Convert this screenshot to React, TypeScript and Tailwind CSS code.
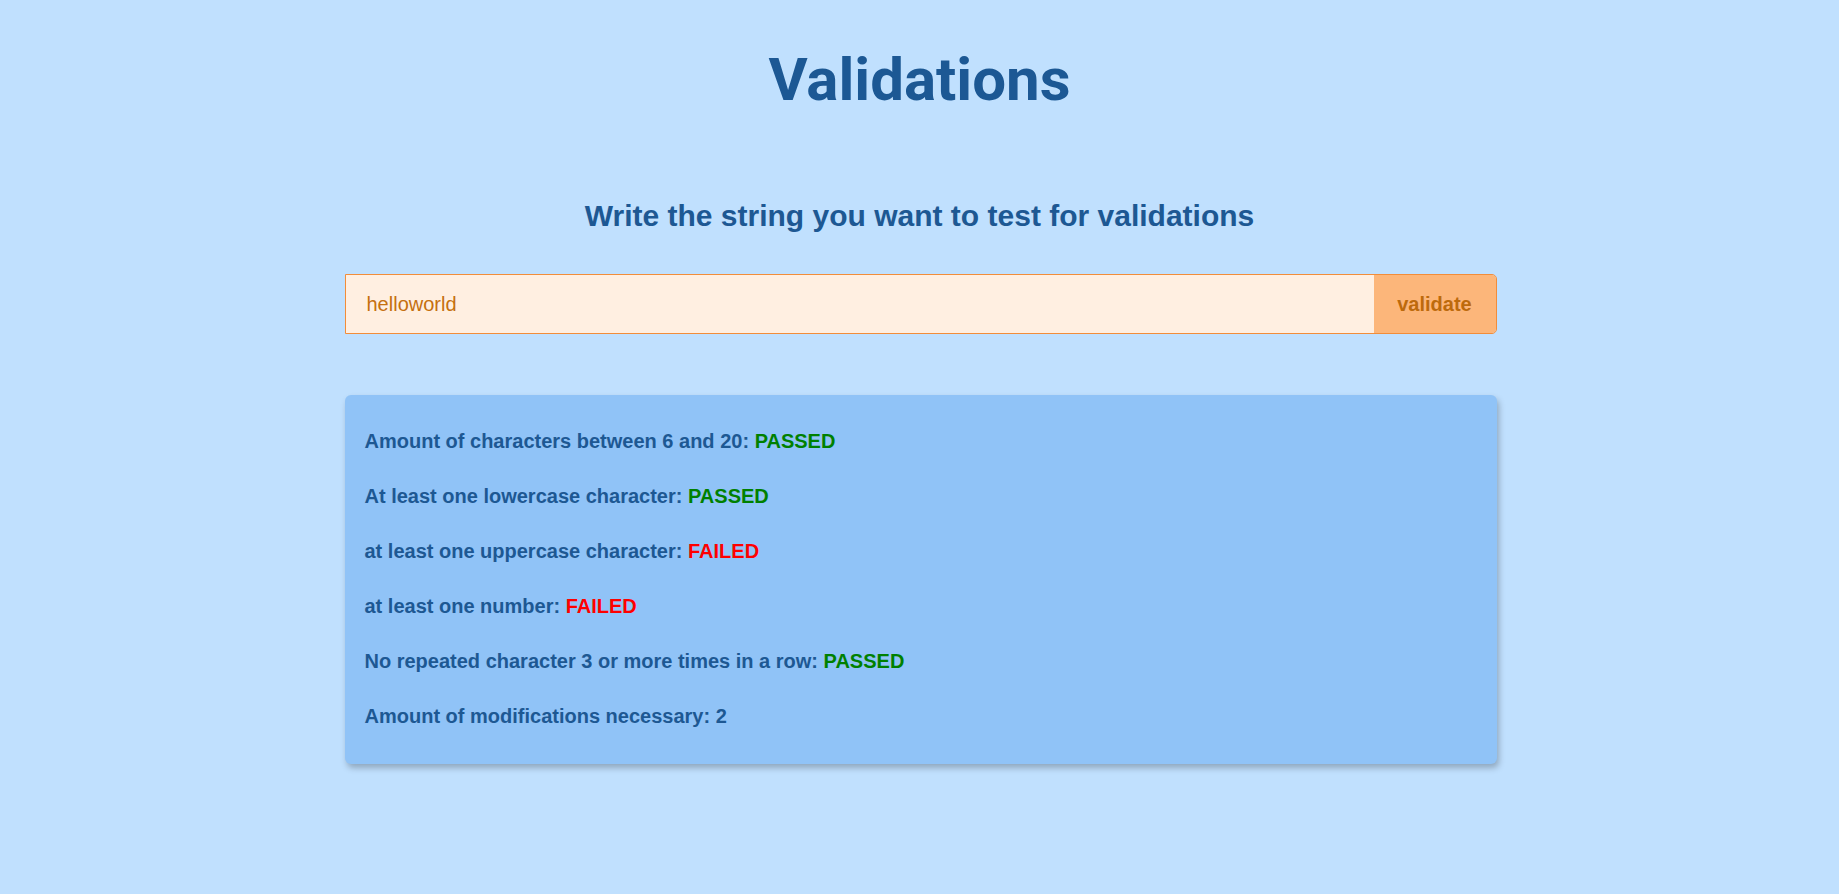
import React, { useState } from 'react';

type Rule = { label: string; passed: boolean };

const getRules = (value: string): Rule[] => [
  { label: 'Amount of characters between 6 and 20', passed: value.length >= 6 && value.length <= 20 },
  { label: 'At least one lowercase character', passed: /[a-z]/.test(value) },
  { label: 'at least one uppercase character', passed: /[A-Z]/.test(value) },
  { label: 'at least one number', passed: /[0-9]/.test(value) },
  { label: 'No repeated character 3 or more times in a row', passed: !/(.)\1\1/.test(value) },
];

const App: React.FC = () => {
  const [text, setText] = useState('helloworld');
  const [checked, setChecked] = useState('helloworld');

  const rules = getRules(checked);
  const modifications = rules.filter(r => !r.passed).length;

  const handleSubmit = (e: React.FormEvent) => {
    e.preventDefault();
    setChecked(text);
  };

  return (
    <div className="min-h-screen bg-[#c0e0fe] font-['Liberation_Sans',Arial,sans-serif] text-[#1d5893]">
      <h1 className="pt-[42px] text-center font-['Roboto',sans-serif] text-[60px] font-bold leading-[76px] text-[#1c5894]">
        Validations
      </h1>

      <h2 className="mt-[81px] text-center text-[30px] font-bold leading-[34px]">
        Write the string you want to test for validations
      </h2>

      {/* Input */}
      <form
        onSubmit={handleSubmit}
        className="mx-auto mt-[41px] flex h-[60px] w-[1152px] translate-x-[1px] overflow-hidden rounded-r-[5px] border border-[#f28d3a]"
      >
        <input
          type="text"
          value={text}
          onChange={e => setText(e.target.value)}
          className="flex-1 bg-[#ffefe1] px-[21px] text-[20px] text-[#c5700f] outline-none"
        />
        <button
          type="submit"
          className="w-[122px] bg-[#fcb67a] text-[20px] font-bold text-[#bd6a0c]"
        >
          validate
        </button>
      </form>

      {/* Results */}
      <div className="mx-auto mt-[61px] flex w-[1152px] translate-x-[1px] flex-col gap-[32px] rounded-[6px] bg-[#90c3f7] px-5 pt-[35px] pb-[36px] text-[20px] font-bold leading-[23px] shadow-[2px_4px_6px_rgba(0,0,0,0.25)]">
        {rules.map(rule => (
          <p key={rule.label}>
            {rule.label}:{' '}
            <span className={rule.passed ? 'text-[#008000]' : 'text-[#ff0000]'}>
              {rule.passed ? 'PASSED' : 'FAILED'}
            </span>
          </p>
        ))}
        <p>Amount of modifications necessary: {modifications}</p>
      </div>
    </div>
  );
};

export default App;
